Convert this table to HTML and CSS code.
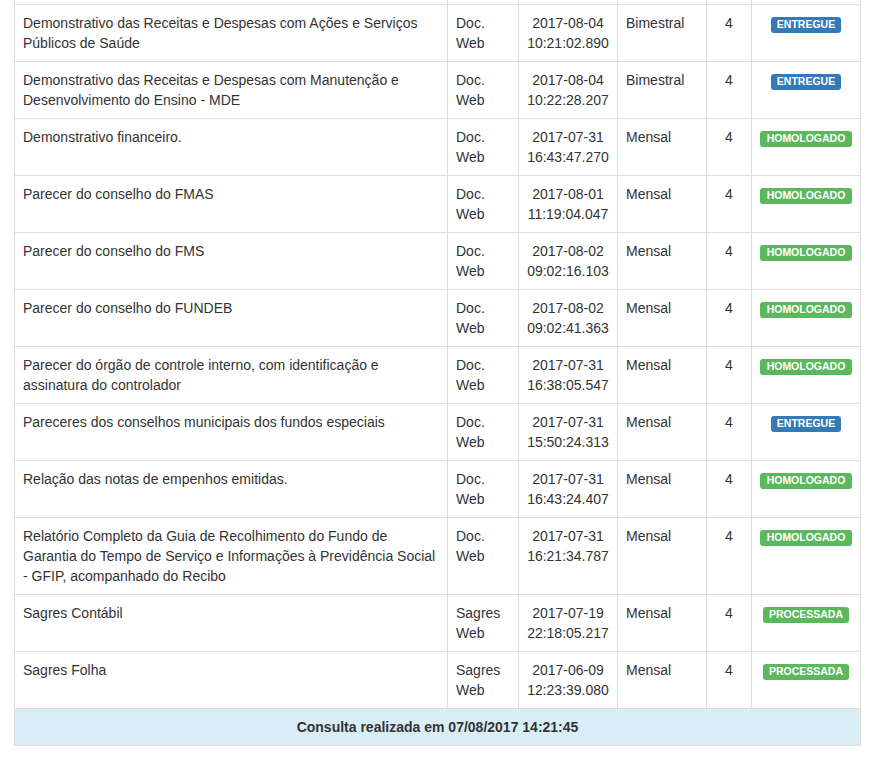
FILE: index.html
```html
<!DOCTYPE html>
<html lang="pt">
<head>
<meta charset="utf-8">
<link rel="stylesheet" href="styles.css">
<title>Consulta</title>
</head>
<body>
<div class="wrap">
<table class="grid">
<colgroup>
<col class="c-desc"><col class="c-tipo"><col class="c-data"><col class="c-per"><col class="c-num"><col class="c-st">
</colgroup>
<tbody>
<tr class="spacer"><td><div class="fill"></div></td><td></td><td></td><td></td><td></td><td></td></tr>
<tr><td>Demonstrativo das Receitas e Despesas com Ações e Serviços Públicos de Saúde</td><td>Doc.<br>Web</td><td class="center">2017-08-04<br>10:21:02.890</td><td>Bimestral</td><td class="center">4</td><td class="center"><span class="label primary">ENTREGUE</span></td></tr>
<tr><td>Demonstrativo das Receitas e Despesas com Manutenção e Desenvolvimento do Ensino - MDE</td><td>Doc.<br>Web</td><td class="center">2017-08-04<br>10:22:28.207</td><td>Bimestral</td><td class="center">4</td><td class="center"><span class="label primary">ENTREGUE</span></td></tr>
<tr><td>Demonstrativo financeiro.</td><td>Doc.<br>Web</td><td class="center">2017-07-31<br>16:43:47.270</td><td>Mensal</td><td class="center">4</td><td class="center"><span class="label success">HOMOLOGADO</span></td></tr>
<tr><td>Parecer do conselho do FMAS</td><td>Doc.<br>Web</td><td class="center">2017-08-01<br>11:19:04.047</td><td>Mensal</td><td class="center">4</td><td class="center"><span class="label success">HOMOLOGADO</span></td></tr>
<tr><td>Parecer do conselho do FMS</td><td>Doc.<br>Web</td><td class="center">2017-08-02<br>09:02:16.103</td><td>Mensal</td><td class="center">4</td><td class="center"><span class="label success">HOMOLOGADO</span></td></tr>
<tr><td>Parecer do conselho do FUNDEB</td><td>Doc.<br>Web</td><td class="center">2017-08-02<br>09:02:41.363</td><td>Mensal</td><td class="center">4</td><td class="center"><span class="label success">HOMOLOGADO</span></td></tr>
<tr><td>Parecer do órgão de controle interno, com identificação e assinatura do controlador</td><td>Doc.<br>Web</td><td class="center">2017-07-31<br>16:38:05.547</td><td>Mensal</td><td class="center">4</td><td class="center"><span class="label success">HOMOLOGADO</span></td></tr>
<tr><td>Pareceres dos conselhos municipais dos fundos especiais</td><td>Doc.<br>Web</td><td class="center">2017-07-31<br>15:50:24.313</td><td>Mensal</td><td class="center">4</td><td class="center"><span class="label primary">ENTREGUE</span></td></tr>
<tr><td>Relação das notas de empenhos emitidas.</td><td>Doc.<br>Web</td><td class="center">2017-07-31<br>16:43:24.407</td><td>Mensal</td><td class="center">4</td><td class="center"><span class="label success">HOMOLOGADO</span></td></tr>
<tr><td>Relatório Completo da Guia de Recolhimento do Fundo de Garantia do Tempo de Serviço e Informações à Previdência Social - GFIP, acompanhado do Recibo</td><td>Doc.<br>Web</td><td class="center">2017-07-31<br>16:21:34.787</td><td>Mensal</td><td class="center">4</td><td class="center"><span class="label success">HOMOLOGADO</span></td></tr>
<tr><td>Sagres Contábil</td><td>Sagres<br>Web</td><td class="center">2017-07-19<br>22:18:05.217</td><td>Mensal</td><td class="center">4</td><td class="center"><span class="label success">PROCESSADA</span></td></tr>
<tr><td>Sagres Folha</td><td>Sagres<br>Web</td><td class="center">2017-06-09<br>12:23:39.080</td><td>Mensal</td><td class="center">4</td><td class="center"><span class="label success">PROCESSADA</span></td></tr>
</tbody>
<tfoot>
<tr class="info"><td colspan="6" class="center bold">Consulta realizada em 07/08/2017 14:21:45</td></tr>
</tfoot>
</table>
</div>
</body>
</html>
```
FILE: styles.css
```css
html, body {
  margin: 0;
  padding: 0;
  background: #fff;
}
body {
  font-family: "Liberation Sans", Arial, Helvetica, sans-serif;
  font-size: 14px;
  line-height: 20px;
  color: #333;
}
.wrap {
  padding-left: 14px;
}
.grid {
  border-collapse: collapse;
  border-spacing: 0;
  table-layout: fixed;
  width: 846px;
  margin-top: -53px;
  margin-bottom: 20px;
  border: 1px solid #ddd;
}
.c-desc { width: 433px; }
.c-tipo { width: 71px; }
.c-data { width: 99px; }
.c-per { width: 89px; }
.c-num { width: 45px; }
.c-st { width: 109px; }
.grid td {
  border: 1px solid #ddd;
  padding: 8px;
  vertical-align: top;
  text-align: left;
}
.fill {
  height: 40px;
}
.grid td.center {
  text-align: center;
}
.grid td.bold {
  font-weight: bold;
}
.grid tr.info td {
  background: #d9edf7;
}
.label {
  display: inline-block;
  font-size: 10.5px;
  font-weight: bold;
  line-height: 1;
  color: #fff;
  padding: 2.1px 6.3px 3.15px;
  border-radius: 3px;
  white-space: nowrap;
  vertical-align: baseline;
}
.label.primary { background: #337ab7; }
.label.success { background: #5cb85c; }
```
